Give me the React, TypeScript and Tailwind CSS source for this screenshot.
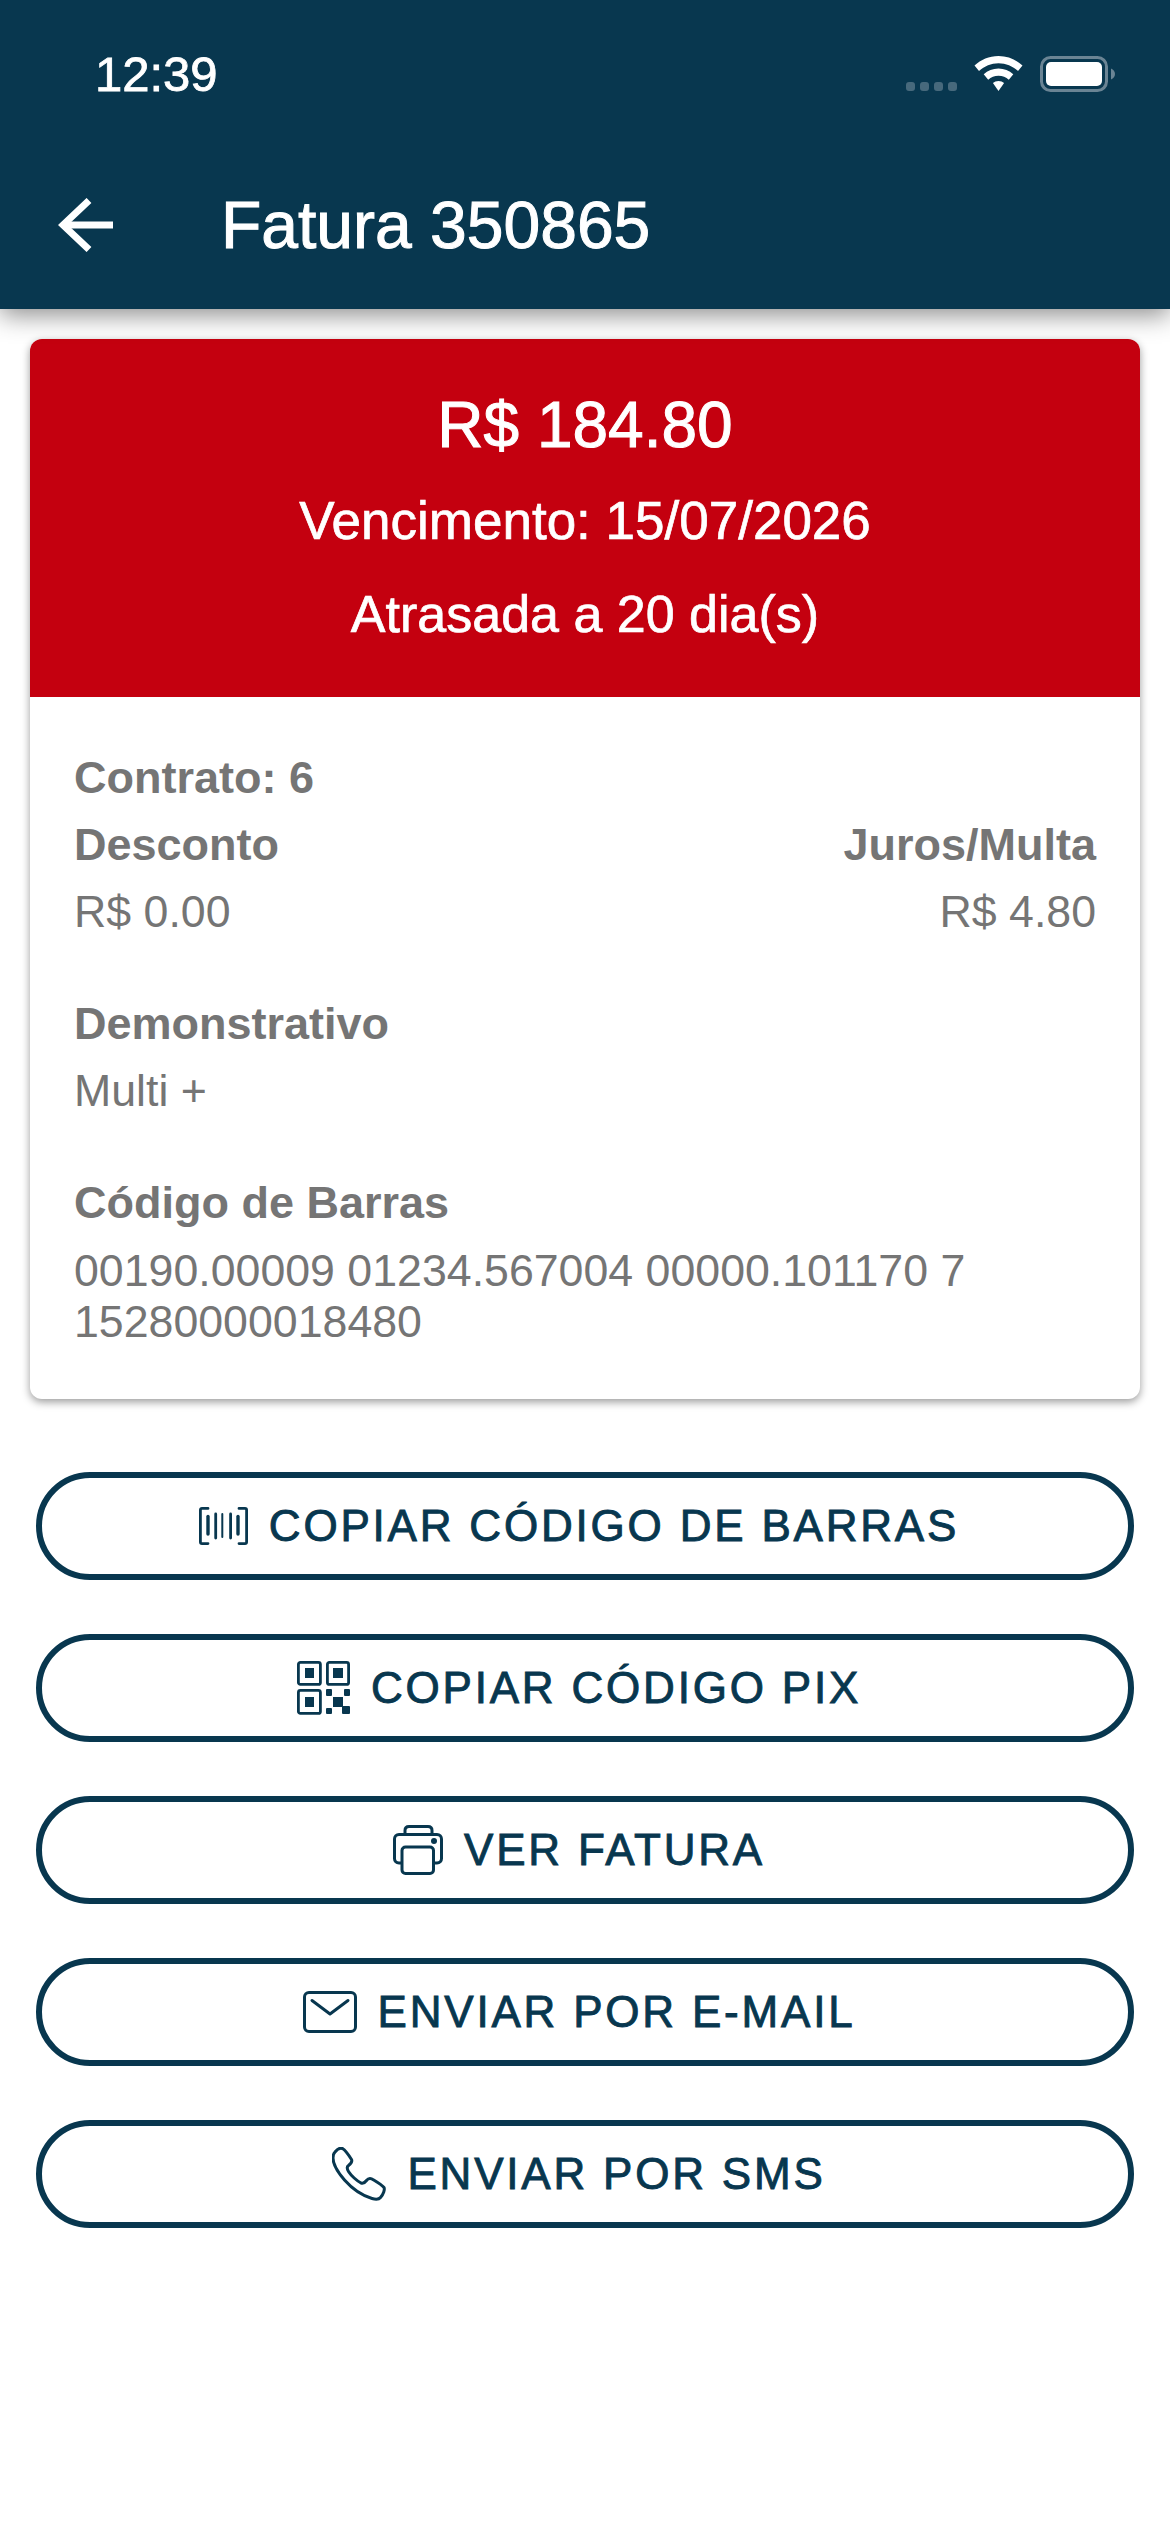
import React from "react";

const navy = "#08374f";

function Wifi() {
  return (
    <svg width="49" height="36" viewBox="0 0 49 36" fill="white">
      <path d="M24.5 0C15 0 7 3.6 0.5 9.5L5 15C10.500 10 17 7.200 24.500 7.200S38.500 10 44 15L48.500 9.500C42 3.600 34 0 24.500 0Z" />
      <path d="M24.500 12.500C18.800 12.500 13.800 14.700 9.700 18.300L14.200 23.800C17 21.300 20.500 19.800 24.500 19.800S32 21.300 34.800 23.800L39.300 18.300C35.200 14.700 30.200 12.500 24.500 12.500Z" />
      <path d="M24.500 25C22.300 25 20.400 25.800 18.900 27.100L24.500 35L30.100 27.100C28.600 25.800 26.700 25 24.500 25Z" />
    </svg>
  );
}

function Battery() {
  return (
    <svg width="75" height="36" viewBox="0 0 75 36">
      <rect x="1.500" y="1.500" width="65" height="33" rx="9" fill="none" stroke="#6a8494" strokeWidth="3" />
      <rect x="6" y="6" width="56" height="24" rx="5" fill="white" />
      <path d="M71 12.500C73.500 13.500 75 15.500 75 18S73.500 22.500 71 23.500Z" fill="#6a8494" />
    </svg>
  );
}

function BarcodeIcon() {
  return (
    <svg width="49" height="38" viewBox="0 0 49 38" fill="none" stroke={navy} strokeLinecap="round">
      <path d="M9 1.400H3C2 1.400 1.400 2 1.400 3V35C1.400 36 2 36.600 3 36.600H9" strokeWidth="2.800" />
      <path d="M40 1.400H46C47 1.400 47.600 2 47.600 3V35C47.600 36 47 36.600 46 36.600H40" strokeWidth="2.800" />
      <path d="M9 9.500V27" strokeWidth="3.400" />
      <path d="M16.700 7V31" strokeWidth="2.800" />
      <path d="M23.300 7V30" strokeWidth="2" />
      <path d="M31.600 7V31" strokeWidth="2.800" />
      <path d="M39 9.500V27" strokeWidth="3.400" />
    </svg>
  );
}

function QrIcon() {
  return (
    <svg width="53" height="54" viewBox="0 0 53 54" fill={navy}>
      <g fill="none" stroke={navy} strokeWidth="2.800">
        <rect x="1.400" y="1.400" width="22" height="22" rx="2" />
        <rect x="30.400" y="1.400" width="21.200" height="22" rx="2" />
        <rect x="1.400" y="29.400" width="22" height="23" rx="2" />
      </g>
      <rect x="8" y="7" width="9" height="10" />
      <rect x="36" y="7" width="10" height="10" />
      <rect x="8" y="36" width="9" height="10" />
      <rect x="29" y="28" width="6" height="7" rx="1" />
      <rect x="47" y="28" width="6" height="7" rx="1" />
      <rect x="36" y="36" width="10" height="10" />
      <rect x="29" y="47" width="6" height="6" rx="1" />
      <rect x="45" y="45" width="8" height="8" rx="1" />
    </svg>
  );
}

function PrinterIcon() {
  return (
    <svg width="50" height="50" viewBox="0 0 50 50" fill="none" stroke={navy} strokeWidth="3" strokeLinejoin="round">
      <path d="M12 9.500V5.500C12 3 13.500 1.500 16 1.500H35C37.500 1.500 39 3 39 5.500V9.500" />
      <path d="M9 38H6C3.300 38 1.500 36.200 1.500 33.500V14C1.500 11.300 3.300 9.500 6 9.500H44C46.700 9.500 48.500 11.300 48.500 14V33.500C48.500 36.200 46.700 38 44 38H41" />
      <rect x="9" y="22" width="31.500" height="26.500" rx="3.500" />
      <circle cx="41" cy="16" r="3" fill={navy} stroke="none" />
    </svg>
  );
}

function MailIcon() {
  return (
    <svg width="54" height="42" viewBox="0 0 54 42" fill="none" stroke={navy} strokeWidth="3" strokeLinecap="round" strokeLinejoin="round">
      <rect x="1.500" y="1.500" width="51" height="39" rx="4.500" />
      <path d="M9 9.500L27 23L45 9.500" />
    </svg>
  );
}

function PhoneIcon() {
  return (
    <svg width="54" height="54" viewBox="0 0 54 54" fill="none" stroke={navy} strokeWidth="3" strokeLinejoin="round">
      <path d="M3 5C5 2.500 8 0.500 10.500 1.500C13 3 17 8.500 19.500 12.500C20.500 14.500 19 16.500 16.500 18.500C14.500 20 15 22 16.500 24.500C19 28.500 25 34 29 36C31.500 37 33 35.500 34.500 33.500C36 31.500 38 31 40 32C44 34.500 50 38 52 40.500C53 42.500 51.500 47 48.500 50.500C46.500 53 43.500 52.500 40 51.500C30 48.500 20 41.500 12.500 33C6 25.500 1 16.500 1 11C1 8.500 1.500 6.500 3 5Z" />
    </svg>
  );
}

function ActionButton({ icon, label }: { icon: React.ReactNode; label: string }) {
  return (
    <div className="flex h-[108px] items-center justify-center gap-[21px] rounded-[54px] border-[6px] border-[#08374f] bg-white pr-[12px]">
      {icon}
      <span className="text-[44px] leading-none tracking-[2.8px] text-[#08374f] [-webkit-text-stroke:0.9px_#08374f]">{label}</span>
    </div>
  );
}

function Field({ label, value, right }: { label: string; value: string; right?: boolean }) {
  return (
    <div className={right ? "text-right" : ""}>
      <div className="text-[45px] font-bold leading-[67px]">{label}</div>
      <div className="text-[44.7px] leading-[67px]">{value}</div>
    </div>
  );
}

export default function App() {
  return (
    <div className="min-h-[2532px] bg-white font-['Liberation_Sans',Arial,sans-serif]">
      <header className="relative z-10 h-[309px] bg-[#08374f] text-white shadow-[0_6px_24px_rgba(0,0,0,0.45)]">
        <div className="flex h-[150px] items-center justify-between pb-[2px] pl-[95px] pr-[55px]">
          <span className="text-[49px] leading-none [-webkit-text-stroke:0.8px_white]">12:39</span>
          <div className="flex items-end gap-[17px]">
            <div className="flex gap-[5px] pb-[1px]">
              {[0, 1, 2, 3].map((i) => (
                <span key={i} className="h-[9px] w-[9px] rounded-[3px] bg-[#47697c]" />
              ))}
            </div>
            <Wifi />
            <Battery />
          </div>
        </div>
        <div className="flex h-[150px] items-center pb-[1px] pl-[58px]">
          <svg width="55" height="54" viewBox="0 0 55 54" fill="none" stroke="white" strokeWidth="7">
            <path d="M55 27H6" />
            <path d="M31 2.500L5 27L31 51.500" />
          </svg>
          <span className="ml-[108px] text-[66px] leading-none [-webkit-text-stroke:1px_white]">Fatura 350865</span>
        </div>
      </header>

      <main className="px-[30px] pt-[30px]">
        <section className="overflow-hidden rounded-[12px] bg-white shadow-[0_3px_8px_rgba(0,0,0,0.4)]">
          <div className="flex h-[358px] flex-col items-center bg-[#c4000f] pt-[51px] text-white">
            <div className="text-[64px] leading-[70px] [-webkit-text-stroke:1px_white]">R$ 184.80</div>
            <div className="mt-[31px] text-[53px] leading-[60px] [-webkit-text-stroke:0.7px_white]">Vencimento: 15/07/2026</div>
            <div className="mt-[33px] text-[52px] leading-[60px] [-webkit-text-stroke:0.7px_white]">Atrasada a 20 dia(s)</div>
          </div>
          <div className="h-[702px] px-[44px] pt-[47px] text-[#757575]">
            <div className="text-[45px] font-bold leading-[67px]">Contrato: 6</div>
            <div className="flex justify-between">
              <Field label="Desconto" value="R$ 0.00" />
              <Field label="Juros/Multa" value="R$ 4.80" right />
            </div>
            <div className="mt-[45px]">
              <Field label="Demonstrativo" value="Multi +" />
            </div>
            <div className="mt-[45px]">
              <div className="text-[45px] font-bold leading-[67px]">Código de Barras</div>
              <div className="mt-[9px] text-[44.7px] leading-[51px]">
                00190.00009 01234.567004 00000.101170 7
                <br />
                15280000018480
              </div>
            </div>
          </div>
        </section>

        <div className="mt-[73px] flex flex-col gap-[54px] px-[6px]">
          <ActionButton icon={<BarcodeIcon />} label="COPIAR CÓDIGO DE BARRAS" />
          <ActionButton icon={<QrIcon />} label="COPIAR CÓDIGO PIX" />
          <ActionButton icon={<PrinterIcon />} label="VER FATURA" />
          <ActionButton icon={<MailIcon />} label="ENVIAR POR E-MAIL" />
          <ActionButton icon={<PhoneIcon />} label="ENVIAR POR SMS" />
        </div>
      </main>
    </div>
  );
}
